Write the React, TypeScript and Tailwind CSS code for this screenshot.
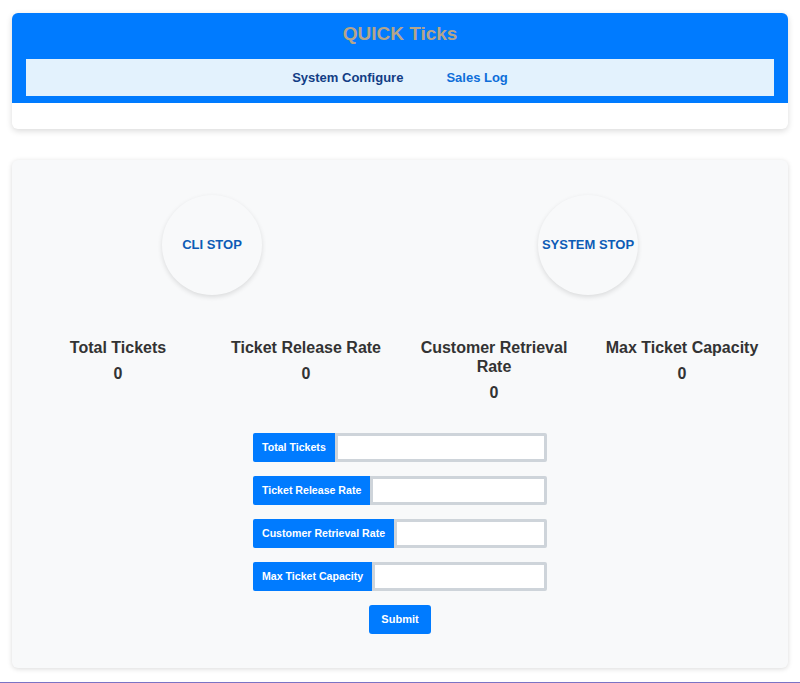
import React from 'react';

const stats = [
  { label: 'Total Tickets', value: 0 },
  { label: 'Ticket Release Rate', value: 0 },
  { label: 'Customer Retrieval Rate', value: 0 },
  { label: 'Max Ticket Capacity', value: 0 },
];

const fields = ['Total Tickets', 'Ticket Release Rate', 'Customer Retrieval Rate', 'Max Ticket Capacity'];

export default function App() {
  return (
    <div className="h-[683px] bg-white border-b border-[#7b73c4] font-['Liberation_Sans',Arial,sans-serif] flex flex-col">
      <div className="mx-3 mt-[13px] bg-white rounded-md shadow-[0_2px_6px_rgba(0,0,0,0.15)] overflow-hidden">
        <div className="bg-[#007bff] pt-[10px] pb-[7px]">
          <h1 className="text-center text-[19px] leading-[22px] font-bold text-[#b5a58a]">QUICK Ticks</h1>
          <nav className="mx-[14px] mt-[14px] h-[37px] bg-[#e3f2fd] flex items-center justify-center gap-[43px] text-[13px] font-bold">
            <span className="text-[#123d85]">System Configure</span>
            <span className="text-[#0e6ed9]">Sales Log</span>
          </nav>
        </div>
        <div className="h-[26px]" />
      </div>

      <div className="mx-3 mt-[31px] h-[508px] bg-[#f8f9fa] rounded-md shadow-[0_1px_5px_rgba(0,0,0,0.15)] px-3">
        <div className="grid grid-cols-2 pt-[35px]">
          {['CLI STOP', 'SYSTEM STOP'].map((t) => (
            <div key={t} className="flex justify-center">
              <div className="w-[100px] h-[100px] rounded-full bg-[#f8f9fa] shadow-[0_2px_5px_rgba(0,0,0,0.12)] flex items-center justify-center text-[13px] font-bold text-[#0d5cb6] whitespace-nowrap">
                {t}
              </div>
            </div>
          ))}
        </div>

        <div className="grid grid-cols-4 mt-[43px] text-[#333] text-center">
          {stats.map((s) => (
            <div key={s.label} className="flex flex-col items-center">
              <div className="max-w-[170px] text-[16px] leading-[19px] font-bold">{s.label}</div>
              <div className="text-[16px] leading-[19px] font-bold mt-[7px]">{s.value}</div>
            </div>
          ))}
        </div>

        <div className="w-[294px] mx-auto mt-[31px] flex flex-col gap-[14px]">
          {fields.map((f) => (
            <div key={f} className="flex h-[29px]">
              <label className="bg-[#007bff] text-white text-[10.6px] font-bold px-[9px] flex items-center rounded-l-[2px] whitespace-nowrap">
                {f}
              </label>
              <input className="flex-1 min-w-0 bg-white border-[3px] border-[#ced4da] rounded-r-[2px] outline-none" />
            </div>
          ))}
          <div className="flex justify-center">
            <button className="bg-[#007bff] text-white text-[11px] font-bold w-[62px] h-[29px] rounded-[3px]">Submit</button>
          </div>
        </div>
      </div>
    </div>
  );
}
